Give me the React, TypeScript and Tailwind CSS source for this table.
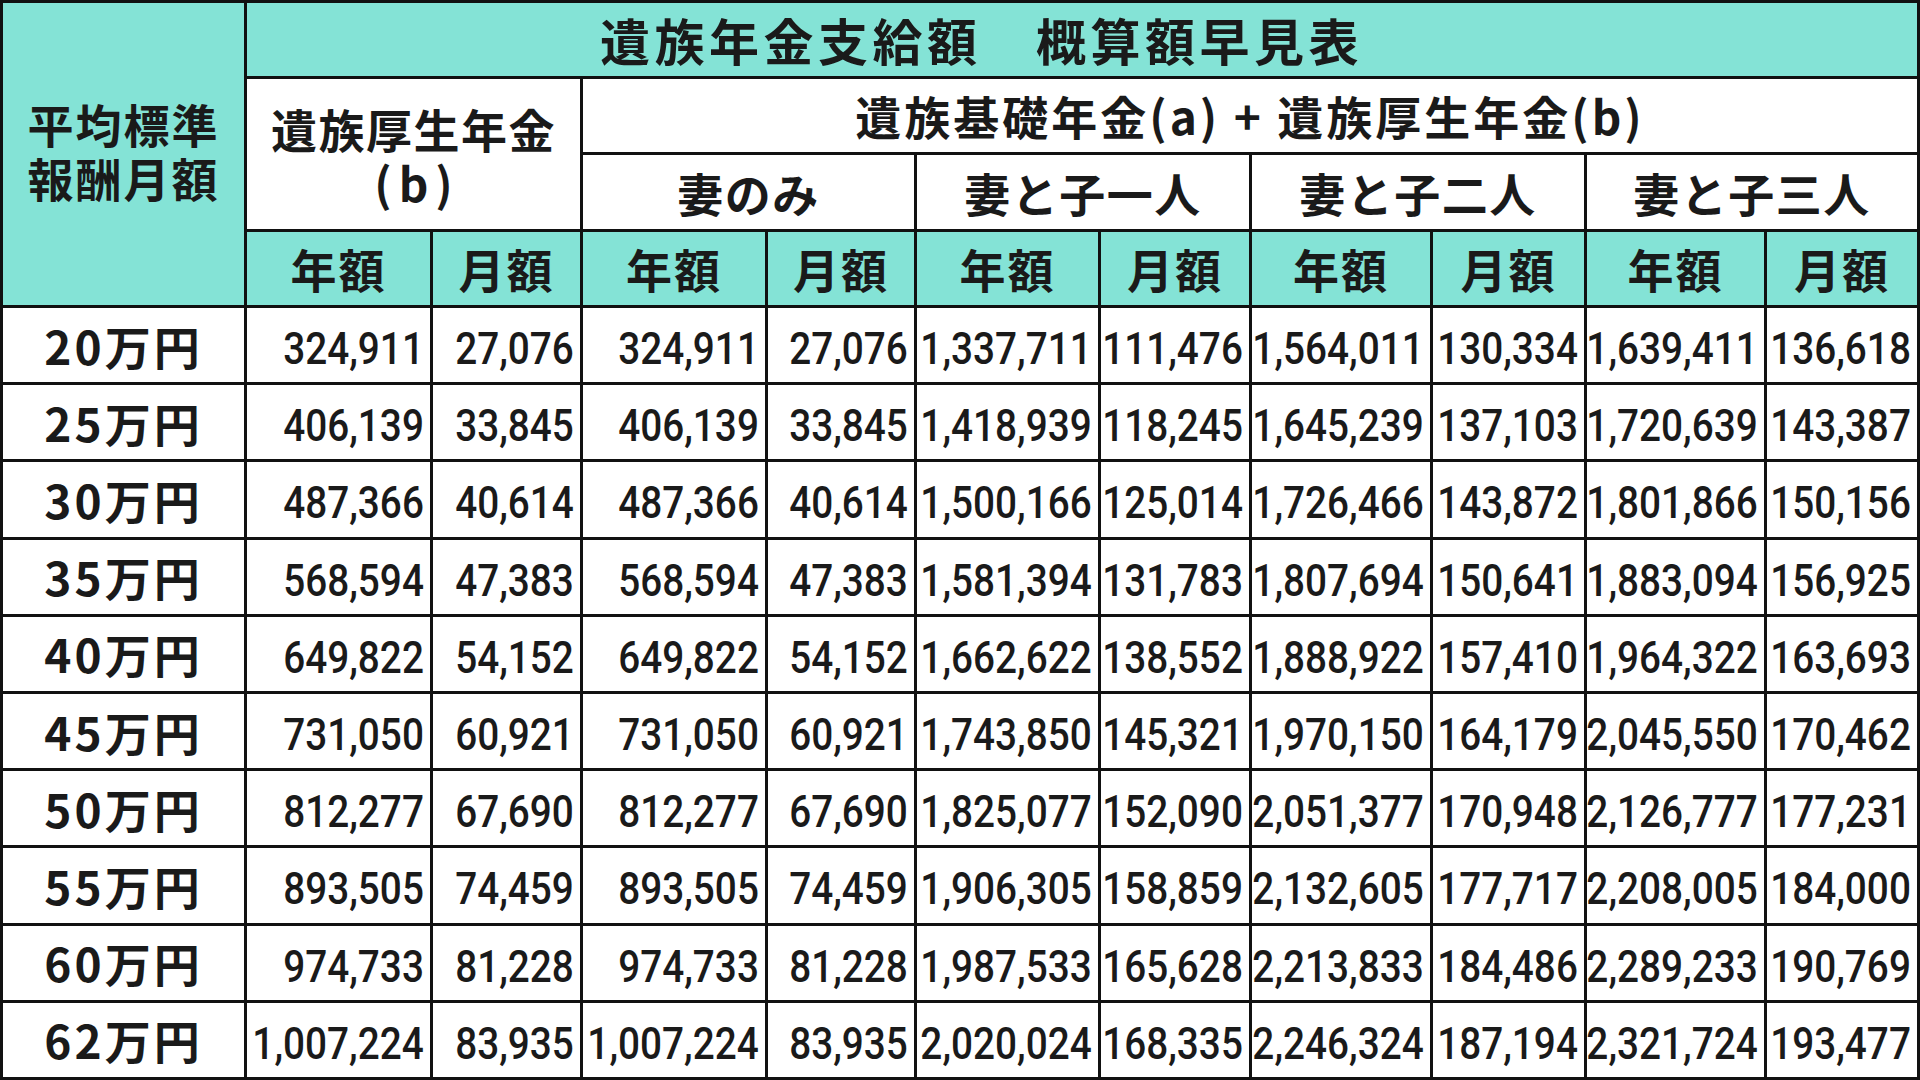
import React from 'react';

const jp = "font-['Noto_Sans_CJK_JP','Noto_Sans',sans-serif] font-bold text-[#1a1a1a]";
const num = "font-['Roboto','Liberation_Sans',sans-serif] font-medium text-[44px] text-[#1a1a1a]";

const rows: [string, string[]][] = [
  ['20万円', ['324,911', '27,076', '324,911', '27,076', '1,337,711', '111,476', '1,564,011', '130,334', '1,639,411', '136,618']],
  ['25万円', ['406,139', '33,845', '406,139', '33,845', '1,418,939', '118,245', '1,645,239', '137,103', '1,720,639', '143,387']],
  ['30万円', ['487,366', '40,614', '487,366', '40,614', '1,500,166', '125,014', '1,726,466', '143,872', '1,801,866', '150,156']],
  ['35万円', ['568,594', '47,383', '568,594', '47,383', '1,581,394', '131,783', '1,807,694', '150,641', '1,883,094', '156,925']],
  ['40万円', ['649,822', '54,152', '649,822', '54,152', '1,662,622', '138,552', '1,888,922', '157,410', '1,964,322', '163,693']],
  ['45万円', ['731,050', '60,921', '731,050', '60,921', '1,743,850', '145,321', '1,970,150', '164,179', '2,045,550', '170,462']],
  ['50万円', ['812,277', '67,690', '812,277', '67,690', '1,825,077', '152,090', '2,051,377', '170,948', '2,126,777', '177,231']],
  ['55万円', ['893,505', '74,459', '893,505', '74,459', '1,906,305', '158,859', '2,132,605', '177,717', '2,208,005', '184,000']],
  ['60万円', ['974,733', '81,228', '974,733', '81,228', '1,987,533', '165,628', '2,213,833', '184,486', '2,289,233', '190,769']],
  ['62万円', ['1,007,224', '83,935', '1,007,224', '83,935', '2,020,024', '168,335', '2,246,324', '187,194', '2,321,724', '193,477']],
];

const groups = ['妻のみ', '妻と子一人', '妻と子二人', '妻と子三人'];

export default function App() {
  return (
    <div className="w-[1920px] h-[1080px] bg-[#111] p-[3px] grid gap-[3px] grid-cols-[241px_183px_147px_182px_146px_181px_148px_178px_151px_177px_150px] grid-rows-[73px_73px_74px_73px_repeat(10,1fr)]">
      {/* header */}
      <div className={`row-span-4 bg-[#84e3d6] flex flex-col items-center justify-center text-center text-[46px] leading-[54px] tracking-[2px] pb-[8px] ${jp}`}>
        <div>平均標準</div>
        <div>報酬月額</div>
      </div>
      <div className={`col-span-10 bg-[#84e3d6] flex items-center pl-[353px] text-[50px] tracking-[4.5px] ${jp}`}>
        遺族年金支給額　概算額早見表
      </div>
      <div className={`col-span-2 row-span-2 bg-white flex flex-col items-center justify-center text-center text-[46px] leading-[54px] tracking-[1.5px] pt-[2px] ${jp}`}>
        <div>遺族厚生年金</div>
        <div className="tracking-[7px] pl-[7px]">(b)</div>
      </div>
      <div className={`col-span-8 bg-white flex items-center justify-center text-[46px] tracking-[3px] ${jp}`}>
        遺族基礎年金(a) + 遺族厚生年金(b)
      </div>
      {groups.map((g) => (
        <div key={g} className={`col-span-2 bg-white flex items-center justify-center text-[46px] tracking-[1.5px] ${jp}`}>
          {g}
        </div>
      ))}
      {Array.from({ length: 5 }).flatMap((_, i) => [
        <div key={`y${i}`} className={`bg-[#84e3d6] flex items-center justify-center text-[46px] tracking-[2px] ${jp}`}>年額</div>,
        <div key={`m${i}`} className={`bg-[#84e3d6] flex items-center justify-center text-[46px] tracking-[2px] ${jp}`}>月額</div>,
      ])}

      {/* body */}
      {rows.map(([label, vals]) => (
        <React.Fragment key={label}>
          <div className={`bg-white flex items-center justify-center text-[46px] tracking-[3px] ${jp}`}>{label}</div>
          {vals.map((v, i) => (
            <div key={i} className={`bg-white flex items-center justify-end pr-[6px] pt-[8px] overflow-hidden ${num}`}>
              <span className="inline-block shrink-0 origin-right scale-x-[0.88]">{v}</span>
            </div>
          ))}
        </React.Fragment>
      ))}
    </div>
  );
}
